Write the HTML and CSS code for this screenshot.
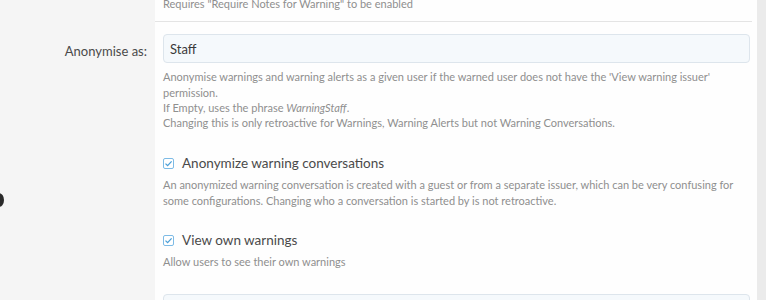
FILE: index.html
```html
<!DOCTYPE html>
<html>
<head>
  <meta charset="UTF-8">
  <title>Warning options</title>
  <link rel="stylesheet" href="styles.css">
</head>
<body>
  <div class="page">
    <div class="block">
      <div class="form-row form-row--prev">
        <div class="form-label"></div>
        <div class="form-input">
          <div class="hint hint--top">Requires "Require Notes for Warning" to be enabled</div>
          <div class="sep"></div>
        </div>
      </div>

      <div class="form-row">
        <div class="form-label"><label for="anonName">Anonymise as:</label></div>
        <div class="form-input">
          <input type="text" id="anonName" class="text-box" value="Staff">
          <div class="hint">
            Anonymise warnings and warning alerts as a given user if the warned user does not have the 'View warning issuer'<br>
            permission.<br>
            If Empty, uses the phrase <i>WarningStaff</i>.<br>
            Changing this is only retroactive for Warnings, Warning Alerts but not Warning Conversations.
          </div>
        </div>
      </div>

      <div class="form-row form-row--check">
        <div class="form-label"></div>
        <div class="form-input">
          <label class="check">
            <span class="check-box"><svg viewBox="0 0 11 11" width="11" height="11"><path d="M2.5 5.6 L4.6 7.6 L8.6 3.4" fill="none" stroke="#4a9fd8" stroke-width="1.3"/></svg></span>
            <span class="check-text">Anonymize warning conversations</span>
          </label>
          <div class="hint">An anonymized warning conversation is created with a guest or from a separate issuer, which can be very confusing for some configurations. Changing who a conversation is started by is not retroactive.</div>
        </div>
      </div>

      <div class="form-row form-row--check">
        <div class="form-label"></div>
        <div class="form-input">
          <label class="check">
            <span class="check-box"><svg viewBox="0 0 11 11" width="11" height="11"><path d="M2.5 5.6 L4.6 7.6 L8.6 3.4" fill="none" stroke="#4a9fd8" stroke-width="1.3"/></svg></span>
            <span class="check-text">View own warnings</span>
          </label>
          <div class="hint">Allow users to see their own warnings</div>
        </div>
      </div>

      <div class="form-row form-row--next">
        <div class="form-label"></div>
        <div class="form-input">
          <input type="text" class="text-box" value="">
        </div>
      </div>
    </div>
    <div class="scroll-strip"></div>
  </div>
  <div class="cursor-dot"></div>
</body>
</html>
```

FILE: styles.css
```css
body {
  margin: 0;
  font-family: Lato, "Open Sans", sans-serif;
  background: #f5f5f5;
  overflow: hidden;
}

.page {
  display: flex;
  height: 300px;
}

.block {
  flex: 1;
  display: flex;
  flex-direction: column;
  background: linear-gradient(to right, #f5f5f5 155px, #fefefe 155px);
}

.scroll-strip {
  width: 9px;
  background: #ebebeb;
}

.form-row {
  display: grid;
  grid-template-columns: 155px 1fr;
}

.form-label {
  text-align: right;
  padding: 21px 8px 0 0;
  font-size: 13px;
  color: #4a4a4a;
}

.form-input {
  padding: 0 7px 0 8px;
}

.form-row--prev .form-input {
  padding: 0;
}

.hint.hint--top {
  margin-top: -4px;
  padding-left: 8px;
}

.sep {
  height: 1px;
  background: #e4e4e4;
  margin: 10px 5px 0 0;
}

.text-box {
  display: block;
  box-sizing: border-box;
  width: 100%;
  height: 29px;
  margin-top: 12px;
  padding: 0 6px;
  font: inherit;
  font-size: 13px;
  color: #3a3a3a;
  background: #f5f9fc;
  border: 1px solid #dde5ec;
  border-radius: 4px;
  outline: none;
}

.form-row--next .text-box {
  margin-top: 25px;
}

.hint {
  margin-top: 6px;
  font-size: 11px;
  line-height: 15.3px;
  color: #8f8f8f;
}

.form-row--check .form-input {
  padding-top: 23px;
}

.form-row--check + .form-row--check .form-input {
  padding-top: 22px;
}

.form-row--check .hint {
  margin-top: 4px;
}

.check {
  display: flex;
  align-items: center;
  gap: 8px;
  height: 20px;
}

.check-box {
  box-sizing: border-box;
  width: 11px;
  height: 11px;
  border: 1px solid #7dbbe6;
  border-radius: 2px;
  background: #fff;
  display: flex;
}

.check-box svg {
  margin: -1px;
}

.check-text {
  font-size: 13.5px;
  color: #4a4a4a;
}

.cursor-dot {
  position: absolute;
  left: -6px;
  top: 193px;
  width: 10px;
  height: 14px;
  border-radius: 50%;
  background: #2a2a2a;
}
```
